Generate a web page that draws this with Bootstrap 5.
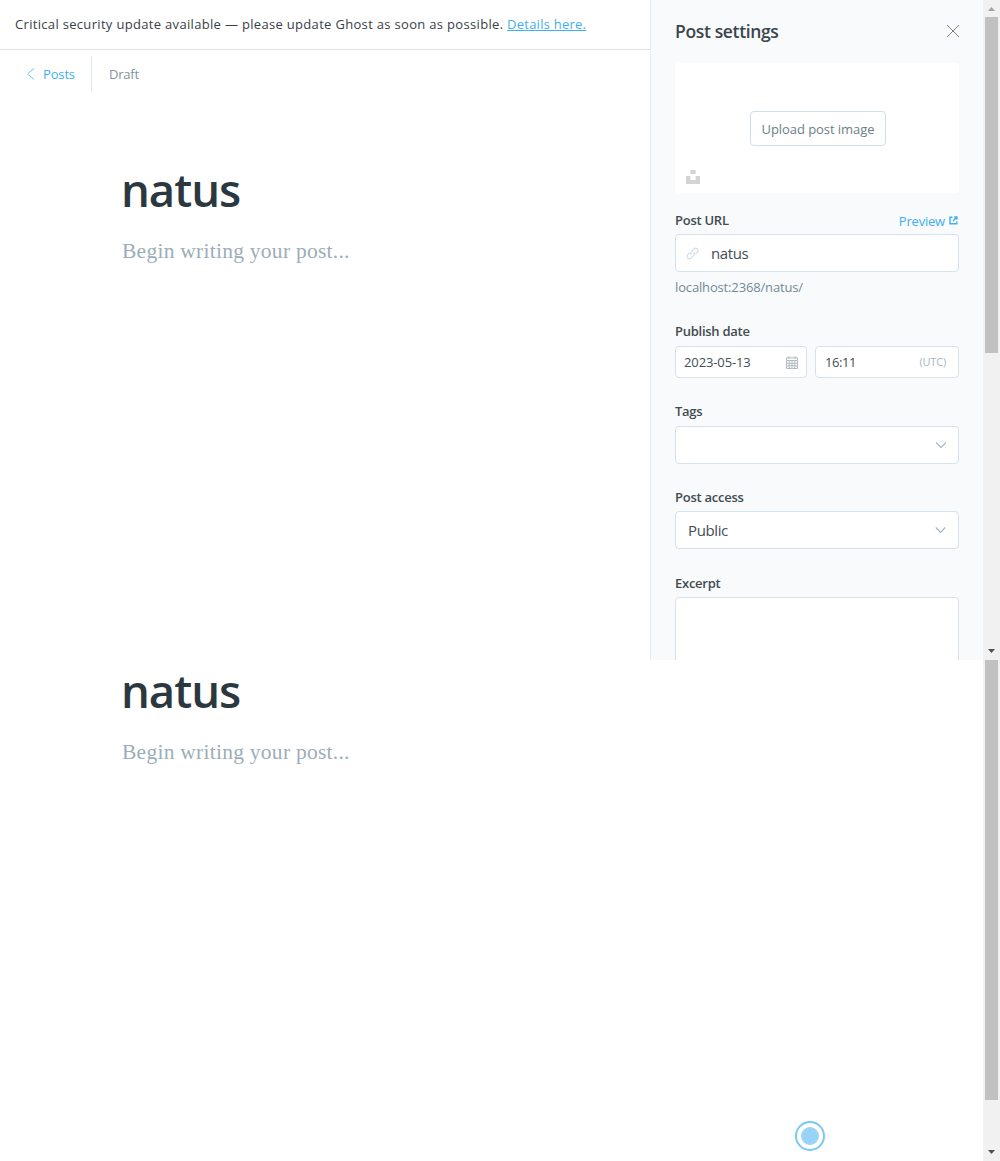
<!DOCTYPE html>
<html lang="en">
<head>
<meta charset="utf-8">
<meta name="viewport" content="width=device-width, initial-scale=1">
<title>Post settings</title>
<link href="https://cdn.jsdelivr.net/npm/bootstrap@5.3.0/dist/css/bootstrap.min.css" rel="stylesheet">
<script src="https://cdn.jsdelivr.net/npm/bootstrap@5.3.0/dist/js/bootstrap.bundle.min.js" defer></script>
<style>
body{font-family:"Open Sans","Noto Sans",sans-serif;font-size:13px;color:#394047;height:1161px;overflow:hidden;background:#fff}
svg{display:block;flex:none}
.pane-top{height:660px;overflow:hidden}
.pane-bottom{height:501px;overflow:hidden}
.notice{height:50px;border-bottom:1px solid #dfe1e3;padding:14px 0 0 15px;line-height:20px;letter-spacing:.32px;white-space:nowrap}
.notice a{letter-spacing:.24px}
.notice a,.blue{color:#3eb0ef}
.crumbs{height:36px;margin-top:6px;line-height:36px}
.crumb-back{width:92px;border-right:1px solid #dfe9f1;padding-left:26px;gap:8px;letter-spacing:-.15px}
.draft{color:#7f95a1;padding-left:17px;letter-spacing:-.2px}
.editor{padding:67px 0 0 122px}
.editor-lower{padding:0 0 0 122px}
.headline{font-size:45.5px;line-height:60px;font-weight:600;color:#2b3840;margin:0 0 0 -1px;letter-spacing:-1.05px}
.writing{font-family:"Liberation Serif",serif;font-size:21.5px;line-height:30px;color:#9baeb9;margin-top:17px;letter-spacing:.26px}
.settings{width:333px;background:#f9fafc;border-left:1px solid #e3edf5;padding:0 24px;overflow:hidden}
.panel-head{height:63px;padding-bottom:2px}
.panel-title{font-size:17.5px;line-height:24px;font-weight:600;color:#3a464c;letter-spacing:-.35px;margin:0}
.upload{height:130px;background:#fff;border-radius:4px;padding:48px 0 0 11px}
.upload-btn{width:136px;height:35px;border:1px solid #cfdfe6;border-radius:4px;background:#fff;color:#6a7f87;font-size:13px;padding:2px 0 0;letter-spacing:-.06px;margin-left:64px;display:block}
.lbl{font-size:13px;line-height:18px;font-weight:600;color:#3f4b51;letter-spacing:-.26px}
.lbl-url{padding-top:18px;height:41px}
.lbl-date{padding-top:25px;height:49px}
.lbl-tags{padding-top:24px;height:48px}
.lbl-access{padding-top:24px;height:47px}
.lbl-excerpt{padding-top:25px;height:48px}
.preview{line-height:18px;letter-spacing:-.2px;gap:4px;padding:1px 1px 0 0}
.fld{border:1px solid #d3e2ec;border-radius:4px;background:#fff;height:38px;font-size:15px;color:#424e54;letter-spacing:-.38px;padding:0 12px}
.fld-url{padding-left:10px;gap:12px}
.fld-sm{height:32px;font-size:13px;letter-spacing:-.12px;padding:0 8px}
.fld-sm span{padding-top:1px}
.clock{padding-left:1px;letter-spacing:-.45px}
.hint{color:#738a94;line-height:20px;letter-spacing:-.15px;margin-top:5px}
.fld-sm .utc{font-size:11px;color:#a9b7bf;letter-spacing:-.2px;margin-right:4px;padding-top:0}
.date{width:132px}
.excerpt{height:80px}
.sbar{width:17px;background:#f1f1f1}
.sbar-btn{height:17px;padding:7px 0 0 5px}
.sbar-down{height:18px}
.thumb{width:13px;margin:0 2px;background:#c1c1c1}
.thumb-top{height:336px}
.thumb-bottom{height:440px}
.recorder{width:30px;height:30px;left:795px;top:1121px}
</style>
</head>
<body class="position-relative">
<div class="pane-top d-flex">
 <main class="flex-grow-1">
  <div class="notice">Critical security update available — please update Ghost as soon as possible. <a href="#">Details here.</a></div>
  <nav class="crumbs d-flex">
   <div class="crumb-back d-flex align-items-center"><svg width="9" height="12" viewBox="0 0 9 12" fill="none" stroke="#6fc4f2"><path d="M8 .5 1.5 6 8 11.5"/></svg><span class="blue">Posts</span></div>
   <div class="draft">Draft</div>
  </nav>
  <div class="editor"><h1 class="headline">natus</h1><div class="writing">Begin writing your post...</div></div>
 </main>
 <aside class="settings">
  <div class="panel-head d-flex justify-content-between align-items-center">
   <h2 class="panel-title">Post settings</h2>
   <svg width="12" height="12" viewBox="0 0 12 12" fill="none" stroke="#6b757b" stroke-width=".9"><path d="M0 0 12 12M12 0 0 12"/></svg>
  </div>
  <div class="upload">
   <button class="upload-btn" type="button">Upload post image</button>
   <svg class="mt-4" width="14" height="14" viewBox="0 0 14 14" fill="#d4d4d4"><path d="M4.4 0h5.2v4H4.4zM0 6h4.4v4h5.2V6H14v8H0z"/></svg>
  </div>
  <div class="lbl-url d-flex justify-content-between">
   <div class="lbl">Post URL</div>
   <div class="preview blue d-flex"><span>Preview</span><svg class="mt-1" width="9" height="9" viewBox="0 0 9 9" fill="none" stroke="#3eb0ef" stroke-width="1.4"><path d="M3.500 1.200H1v6.600h6.800V5.500M5.200 1h2.700v2.700M7.700 1.200 4 5"/></svg></div>
  </div>
  <div class="fld fld-url d-flex align-items-center">
   <svg width="13" height="13" viewBox="0 0 13 13" fill="none" stroke="#cfdfea" stroke-width="1.2"><path d="M5.300 7.700C4 6.400 4.700 5.200 5.700 4.200l2-2c1.100-1.100 2.300-1.400 3.500-.4s1 2.500 0 3.500L9.400 7.100M7.700 5.300C9 6.600 8.300 7.800 7.300 8.800l-2 2c-1.100 1.100-2.300 1.400-3.500.4s-1-2.500 0-3.500l1.800-1.800"/></svg>
   <span>natus</span>
  </div>
  <div class="hint">localhost:2368/natus/</div>
  <div class="lbl lbl-date">Publish date</div>
  <div class="d-flex gap-2">
   <div class="fld fld-sm date d-flex align-items-center justify-content-between"><span>2023-05-13</span>
    <svg width="12" height="13" viewBox="0 0 12 13" fill="none" stroke="#aab5ba" stroke-width=".9"><path d="M.5 1.900h11v10.600H.5zM.5 4.500h11M3 0v3M9 0v3M.5 7.200h11M.5 9.800h11M3.200 4.500v8M6 4.500v8M8.800 4.500v8"/></svg></div>
   <div class="fld fld-sm flex-grow-1 d-flex align-items-center justify-content-between"><span class="clock">16:11</span><span class="utc">(UTC)</span></div>
  </div>
  <div class="lbl lbl-tags">Tags</div>
  <div class="fld d-flex align-items-center justify-content-end"><svg width="11" height="7" viewBox="0 0 11 7" fill="none" stroke="#a3b5bf" stroke-width="1.100"><path d="M1 .5 6 5.500 11 .5"/></svg></div>
  <div class="lbl lbl-access">Post access</div>
  <div class="fld d-flex align-items-center justify-content-between"><span>Public</span><svg width="11" height="7" viewBox="0 0 11 7" fill="none" stroke="#a3b5bf" stroke-width="1.100"><path d="M.8.500 5.500 5.500 10.200.500"/></svg></div>
  <div class="lbl lbl-excerpt">Excerpt</div>
  <div class="fld excerpt"></div>
 </aside>
 <div class="sbar d-flex flex-column">
  <div class="sbar-btn"><svg width="7" height="4" viewBox="0 0 7 4" fill="#a3a3a3"><path d="M0 4 3.500 0 7 4z"/></svg></div>
  <div class="thumb thumb-top"></div>
  <div class="sbar-btn sbar-down mt-auto"><svg width="7" height="4" viewBox="0 0 7 4" fill="#505050"><path d="M0 0 3.500 4 7 0z"/></svg></div>
 </div>
</div>
<div class="pane-bottom d-flex">
 <div class="flex-grow-1 editor-lower"><h1 class="headline">natus</h1><div class="writing">Begin writing your post...</div></div>
 <div class="sbar d-flex flex-column">
  <div class="thumb thumb-bottom"></div>
  <div class="sbar-btn sbar-down mt-auto"><svg width="7" height="4" viewBox="0 0 7 4" fill="#505050"><path d="M0 0 3.500 4 7 0z"/></svg></div>
 </div>
</div>
<svg class="recorder position-absolute" viewBox="0 0 30 30"><circle cx="15" cy="15" r="14" fill="#fff" stroke="#7ac8f3" stroke-width="2"/><circle cx="15" cy="15" r="9" fill="#97d3f6"/><circle cx="15" cy="15" r="7.800" fill="none" stroke="#a9dbf8" stroke-width=".7" stroke-dasharray="3 1.500"/></svg>
</body>
</html>
